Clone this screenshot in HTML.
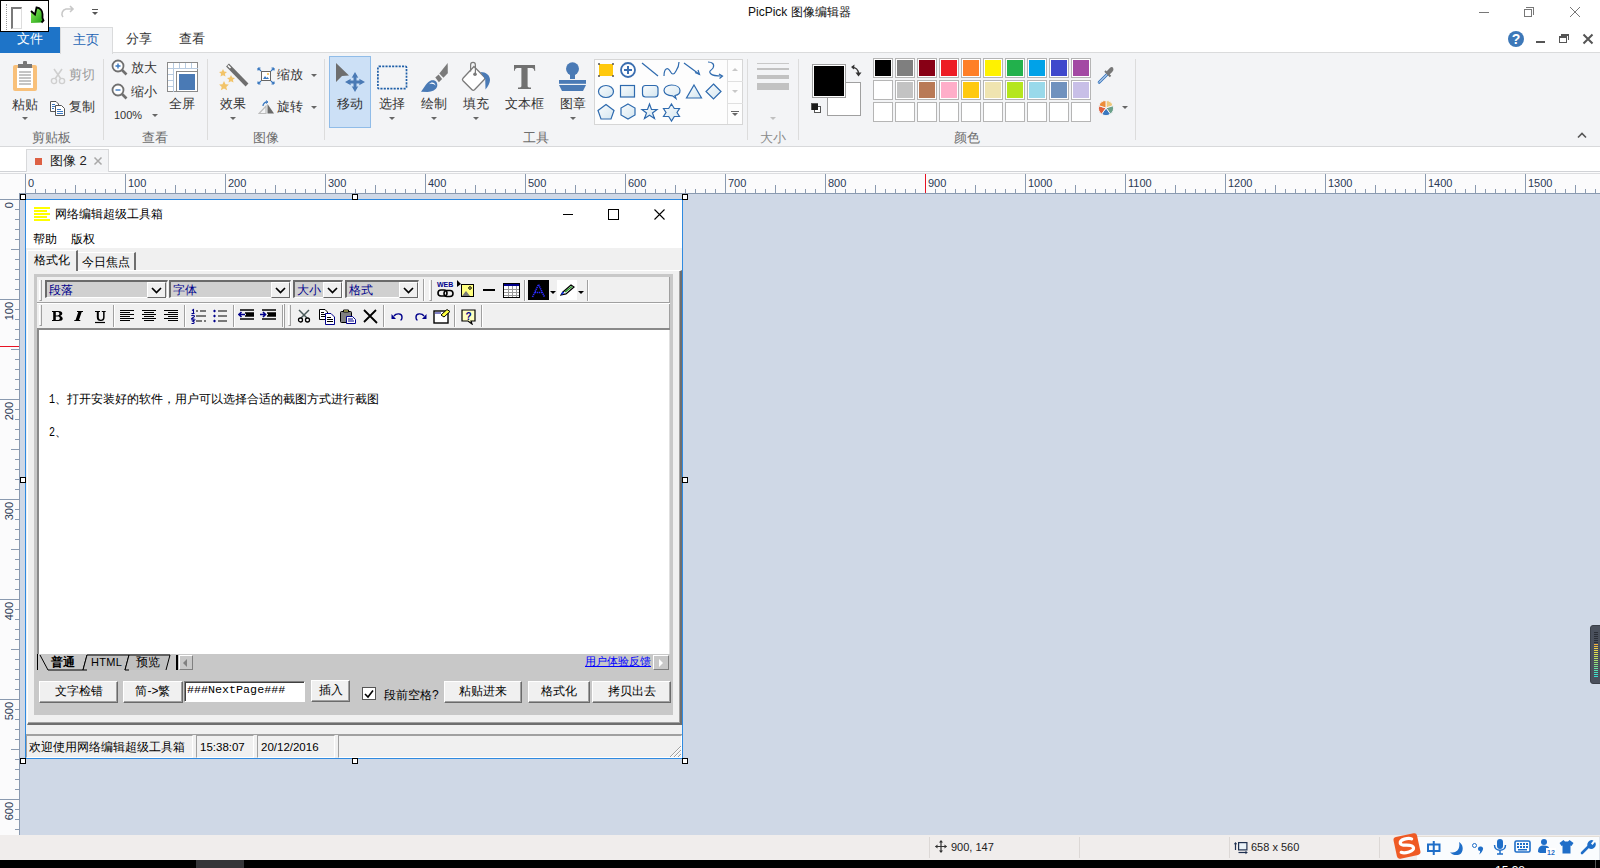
<!DOCTYPE html>
<html><head><meta charset="utf-8">
<style>
*{box-sizing:border-box}
html,body{margin:0;padding:0;width:1600px;height:868px;overflow:hidden;background:#fff;font-family:"Liberation Sans",sans-serif;font-size:12px;color:#222}
.a{position:absolute}
.t{position:absolute;white-space:nowrap;line-height:1}
#title{left:0;top:0;width:1600px;height:27px;background:#fff}
#tabs{left:0;top:27px;width:1600px;height:26px;background:#fff;border-bottom:1px solid #dadbdc}
#ribbon{left:0;top:52px;width:1600px;height:95px;background:#f3f4f6;border-top:1px solid #dadbdc;border-bottom:1px solid #d8d9db}
#doctabs{left:0;top:147px;width:1600px;height:25px;background:#fff;border-bottom:1px solid #d0d2d6}
#hruler{left:0;top:172px;width:1600px;height:22px;background:#fbfbfc}
#vruler{left:0;top:194px;width:20px;height:641px;background:#fbfbfc}
#canvas{left:20px;top:194px;width:1580px;height:641px;background:#cfd8e6}
#status{left:0;top:835px;width:1600px;height:25px;background:#f0edec}
#taskbar{left:0;top:860px;width:1600px;height:8px;background:#000}
.sep{position:absolute;width:1px;background:#dcdcdc}
.glabel{position:absolute;color:#6d6d6d;font-size:13px;line-height:1;white-space:nowrap;margin-top:1px}
.lbl{position:absolute;color:#333;font-size:13px;line-height:1;white-space:nowrap}
.dd{position:absolute;width:0;height:0;border-left:3px solid transparent;border-right:3px solid transparent;border-top:3px solid #666}
.sw{position:absolute;width:20px;height:20px;border:1px solid #b5b5b5;background:#fff}
.sw i{position:absolute;left:1px;top:1px;width:16px;height:16px}
.rl{font-size:11px;color:#2b3a55}
.hr{margin-top:1px}
.vr{writing-mode:vertical-rl;transform:rotate(180deg)}
.grip{width:3px;border-left:1px solid #fff;border-right:1px solid #a0a0a0;border-bottom:1px solid #a0a0a0}
.vsep{width:2px;border-left:1px solid #a0a0a0;border-right:1px solid #fff}
.sel{position:absolute;height:18px;background:#d0d0d0;border-top:2px solid #6a6a6a;border-left:2px solid #6a6a6a;border-right:1px solid #fff;border-bottom:1px solid #fff}
.sel span{position:absolute;left:2px;top:1px;font-size:12px;color:#00008b;line-height:14px}
.sel b{position:absolute;top:0;width:19px;height:16px;background:#f0f0f0;border:1px solid;border-color:#fff #6a6a6a #6a6a6a #fff}
.sel b svg{position:absolute;left:3px;top:4px}
.ddk{width:0;height:0;border-left:3px solid transparent;border-right:3px solid transparent;border-top:3px solid #000}
.ed{font-size:12px;color:#000}
.btn{position:absolute;height:22px;background:#f0f0f0;border:1px solid;border-color:#fff #6a6a6a #6a6a6a #fff;box-shadow:inset -1px -1px 0 #a0a0a0;font-size:12px;color:#000;text-align:center;line-height:19px;white-space:nowrap}
.cell{position:absolute;height:23px;border:1px solid;border-color:#a0a0a0 #fff #fff #a0a0a0;font-size:12px;color:#000;padding:5px 0 0 2px;line-height:13px;white-space:nowrap}
.h{position:absolute;width:6px;height:6px;background:#fff;border:1px solid #000}
</style></head><body>
<!-- TITLE BAR -->
<div id="title" class="a">
  <div class="a" style="left:0;top:0;width:49px;height:32px;border:1px solid #000;border-width:1px 1px 1.5px 1px;background:#fff;z-index:5">
    <div class="a" style="left:5px;top:3px;width:1px;height:26px;border-left:1px dotted #999"></div>
    <div class="a" style="left:10px;top:6px;width:11px;height:22px;border-left:2px solid #7a7a7a;border-top:2px solid #7a7a7a;border-right:1px solid #ddd;border-bottom:1px solid #ddd"></div>
    <svg class="a" style="left:29px;top:5px" width="15" height="18" viewBox="29 5 15 18"><defs><linearGradient id="gr" x1="0" y1="0" x2="1" y2="1"><stop offset="0" stop-color="#8ff060"/><stop offset="1" stop-color="#1a9a10"/></linearGradient></defs><path d="M30 22 L30 10 L34 13.5 L35.5 6.5 C39.5 7 41.5 10 41.5 13 L41.5 17 L42.5 19.5 L40.5 21.5 Z" fill="url(#gr)"/><path d="M30 10 L34 13.5 L35.5 6.5 C39.5 7 41.5 10 41.5 13 L41.5 17 L42.5 19.5 L40.5 21.5" fill="none" stroke="#000" stroke-width="1.8"/></svg>
  </div>
  <svg class="a" style="left:60px;top:5px" width="16" height="14" viewBox="0 0 16 14"><path d="M3 12 A5 5 0 0 1 6 4 L13 4 M10 1 L13 4 L10 7" fill="none" stroke="#c8c8c8" stroke-width="1.6"/></svg>
  <div class="a" style="left:92px;top:9px;width:6px;height:1px;background:#555"></div>
  <div class="dd" style="left:92px;top:12px;border-top-color:#555"></div>
  <div class="t" style="left:748px;top:6px;font-size:12px;color:#111">PicPick 图像编辑器</div>
  <div class="a" style="left:1479px;top:12px;width:10px;height:1px;background:#777"></div>
  <div class="a" style="left:1524px;top:9px;width:8px;height:8px;border:1px solid #777"></div>
  <div class="a" style="left:1526px;top:7px;width:8px;height:8px;border-top:1px solid #777;border-right:1px solid #777"></div>
  <svg class="a" style="left:1569px;top:6px" width="12" height="12"><path d="M1 1 L11 11 M11 1 L1 11" stroke="#777" stroke-width="1"/></svg>
</div>
<!-- RIBBON TABS -->
<div id="tabs" class="a">
  <div class="a" style="left:0;top:0;width:60px;height:26px;background:#1e74c8;z-index:3"></div>
  <div class="t" style="left:17px;top:5px;font-size:13px;color:#fff;z-index:4">文件</div>
  <div class="a" style="left:60px;top:0;width:53px;height:27px;background:#f3f4f6;border:1px solid #dadbdc;border-bottom:none;z-index:3"></div>
  <div class="t" style="left:73px;top:6px;font-size:13px;color:#1e64b4;z-index:4">主页</div>
  <div class="t" style="left:126px;top:5px;font-size:13px;color:#333">分享</div>
  <div class="t" style="left:179px;top:5px;font-size:13px;color:#333">查看</div>
  <svg class="a" style="left:1507px;top:3px" width="18" height="18" viewBox="0 0 18 18"><circle cx="9" cy="9" r="8" fill="#3d78b8"/><text x="9" y="14" font-family="Liberation Sans" font-weight="bold" font-size="14" fill="#fff" text-anchor="middle">?</text></svg>
  <div class="a" style="left:1536px;top:14px;width:9px;height:2px;background:#555"></div>
  <div class="a" style="left:1559px;top:9px;width:8px;height:7px;border:1px solid #555;border-top-width:2px"></div>
  <div class="a" style="left:1561px;top:7px;width:8px;height:6px;border-top:2px solid #555;border-right:1px solid #555"></div>
  <svg class="a" style="left:1582px;top:6px" width="12" height="12"><path d="M1.5 1.5 L10.5 10.5 M10.5 1.5 L1.5 10.5" stroke="#555" stroke-width="2"/></svg>
</div>
<!-- RIBBON -->
<div id="ribbon" class="a"></div>
<!-- RIBBON CONTENT -->
<div id="rib">
<!-- clipboard -->
<svg class="a" style="left:12px;top:60px" width="27" height="33" viewBox="0 0 27 33">
 <rect x="1" y="5" width="24" height="26" rx="2" fill="#f8c07a"/>
 <rect x="5" y="8" width="16" height="20" fill="#fff"/>
 <path d="M6 4 L20 4 L20 8 L6 8 Z" fill="#777"/><rect x="11" y="1" width="4" height="4" rx="1" fill="#777"/>
 <path d="M7 12h12M7 15h12M7 18h12M7 21h12M7 24h12" stroke="#8a8a8a" stroke-width="1"/>
</svg>
<div class="lbl" style="left:12px;top:98px">粘贴</div>
<div class="dd" style="left:22px;top:117px"></div>
<svg class="a" style="left:50px;top:68px" width="16" height="17" viewBox="0 0 16 17"><path d="M4 1 L11 11 M12 1 L5 11" stroke="#cfcfcf" stroke-width="1.6"/><circle cx="4" cy="13" r="2.6" fill="none" stroke="#cfcfcf" stroke-width="1.4"/><circle cx="12" cy="13" r="2.6" fill="none" stroke="#cfcfcf" stroke-width="1.4"/></svg>
<div class="lbl" style="left:69px;top:68px;color:#9a9a9a">剪切</div>
<svg class="a" style="left:49px;top:100px" width="18" height="17" viewBox="49 100 18 17"><path d="M50.5 101.5 H56 L58.5 104 V111.5 H50.5 Z" fill="#fff" stroke="#555"/><path d="M55.5 105.5 H61.5 L64.5 108.5 V115.5 H55.5 Z" fill="#fff" stroke="#555"/><path d="M52 104.5 H55 M52 106.5 H55 M52 108.5 H54" stroke="#3a78c0"/><path d="M57 109.5 H61 M57 111.5 H63 M57 113.5 H63" stroke="#3a78c0"/></svg>
<div class="lbl" style="left:69px;top:100px">复制</div>
<div class="sep" style="left:103px;top:59px;height:81px"></div>
<div class="glabel" style="left:32px;top:130px">剪贴板</div>
<!-- view -->
<svg class="a" style="left:111px;top:59px" width="17" height="17" viewBox="0 0 17 17"><circle cx="7" cy="7" r="5.5" fill="#fff" stroke="#707070" stroke-width="1.8"/><path d="M11 11 L15.5 15.5" stroke="#707070" stroke-width="2.6"/><path d="M4.5 7h5M7 4.5v5" stroke="#3a78c0" stroke-width="1.4"/></svg>
<div class="lbl" style="left:131px;top:61px">放大</div>
<svg class="a" style="left:111px;top:83px" width="17" height="17" viewBox="0 0 17 17"><circle cx="7" cy="7" r="5.5" fill="#fff" stroke="#707070" stroke-width="1.8"/><path d="M11 11 L15.5 15.5" stroke="#707070" stroke-width="2.6"/><path d="M4.5 7h5" stroke="#3a78c0" stroke-width="1.4"/></svg>
<div class="lbl" style="left:131px;top:85px">缩小</div>
<div class="t" style="left:114px;top:110px;font-size:11px;color:#333">100%</div>
<div class="dd" style="left:152px;top:114px"></div>
<svg class="a" style="left:167px;top:62px" width="32" height="31" viewBox="0 0 32 31">
 <rect x="0.5" y="0.5" width="30" height="29" fill="#fff" stroke="#8a8a8a"/>
 <path d="M6.5 1v29M12.5 1v6M18.5 1v6M24.5 1v6M1 6.5h30M1 12.5h6M1 18.5h6M1 24.5h6" stroke="#b8cbe0"/>
 <rect x="9.5" y="9.5" width="21" height="20" fill="#fff" stroke="#8a8a8a"/>
 <rect x="12" y="12" width="16" height="16" fill="#4a7ab5"/>
</svg>
<div class="lbl" style="left:169px;top:97px">全屏</div>
<div class="sep" style="left:207px;top:59px;height:81px"></div>
<div class="glabel" style="left:142px;top:130px">查看</div>
<!-- image -->
<svg class="a" style="left:217px;top:62px" width="33" height="31" viewBox="0 0 33 31">
 <path d="M10.5 3 L30 23" stroke="#6e6e6e" stroke-width="4"/><path d="M11 3.5 L13.5 6" stroke="#fff" stroke-width="1.6"/>
 <path d="M6 7l1.2 2.6 2.8.3-2.1 1.9.6 2.8-2.5-1.4-2.5 1.4.6-2.8-2.1-1.9 2.8-.3z" fill="#f2c46a"/>
 <path d="M14 13l1.2 2.6 2.8.3-2.1 1.9.6 2.8-2.5-1.4-2.5 1.4.6-2.8-2.1-1.9 2.8-.3z" fill="#f2c46a"/>
 <path d="M7 19l1.5 3.2 3.4.4-2.6 2.3.8 3.4-3.1-1.8-3.1 1.8.8-3.4-2.6-2.3 3.4-.4z" fill="#f2c46a"/>
</svg>
<div class="lbl" style="left:220px;top:97px">效果</div>
<div class="dd" style="left:230px;top:117px"></div>
<svg class="a" style="left:257px;top:67px" width="18" height="18" viewBox="0 0 18 18">
 <rect x="4.5" y="4.5" width="9" height="9" fill="#fff" stroke="#666"/><path d="M6 12l2-3 1.5 2 1-1 1.5 2z" fill="#3a78c0"/><circle cx="11" cy="7" r="1" fill="#f2b84a"/>
 <path d="M1 1l3 3M1 1h2.5M1 1v2.5M17 1l-3 3M17 1h-2.5M17 1v2.5M1 17l3-3M1 17h2.5M1 17v-2.5M17 17l-3-3M17 17h-2.5M17 17v-2.5" stroke="#3a78c0" stroke-width="1.2"/>
</svg>
<div class="lbl" style="left:277px;top:68px">缩放</div>
<div class="dd" style="left:311px;top:74px"></div>
<svg class="a" style="left:258px;top:100px" width="17" height="14" viewBox="0 0 17 14"><path d="M1 13.5 L8 13.5 L8 6 Z" fill="none" stroke="#bdbdbd" stroke-width="1.2"/><path d="M9.5 13.5 L16 13.5 L9.5 4 Z" fill="#6a6a6a"/><path d="M5 6 A4 4 0 0 1 9 2" fill="none" stroke="#3a78c0" stroke-width="1.3"/><path d="M8 0.5 L10 2 L8 3.5" fill="none" stroke="#3a78c0" stroke-width="1"/></svg>
<div class="lbl" style="left:277px;top:100px">旋转</div>
<div class="dd" style="left:311px;top:106px"></div>
<div class="sep" style="left:324px;top:59px;height:81px"></div>
<div class="glabel" style="left:253px;top:130px">图像</div>
<!-- tools -->
<div class="a" style="left:329px;top:56px;width:42px;height:72px;background:#cce0f6;border:1px solid #90bce8"></div>
<svg class="a" style="left:330px;top:58px" width="40" height="38" viewBox="330 58 40 38">
 <path d="M336 63 L349 75.5 L342 76 L336 82 Z" fill="#6e6e6e"/>
 <path d="M355 75 V89 M348 82 H362" stroke="#4a7ab5" stroke-width="3"/>
 <path d="M355 72 L358.3 77.8 Q355 76.6 351.7 77.8 Z M355 92 L358.3 86.2 Q355 87.4 351.7 86.2 Z M345 82 L350.8 78.7 Q349.6 82 350.8 85.3 Z M365 82 L359.2 78.7 Q360.4 82 359.2 85.3 Z" fill="#4a7ab5"/>
</svg>
<div class="lbl" style="left:337px;top:97px">移动</div>
<svg class="a" style="left:374px;top:62px" width="36" height="30" viewBox="374 62 36 30"><rect x="377.9" y="66.4" width="28.6" height="22.2" rx="1" fill="none" stroke="#1f5fa8" stroke-width="1.7" stroke-dasharray="2.1 1.2"/></svg>
<div class="lbl" style="left:379px;top:97px">选择</div>
<div class="dd" style="left:389px;top:117px"></div>
<svg class="a" style="left:415px;top:58px" width="40" height="38" viewBox="415 58 40 38">
 <path d="M447.7 63 L447.8 73.3 L443.4 77.7 L439.3 73.6 Z" fill="#7a7a7a"/>
 <path d="M435.3 77.6 L438.6 74.4 L442.1 78.9 L438.9 82.2 Z" fill="#7a7a7a"/>
 <path d="M421 91.8 C424.5 87.5 427 81.5 431.5 80.3 C435.5 79.5 438 82.5 437.2 86.2 C436.3 89.8 432 91.8 427.5 91.9 Z" fill="#4a7ab5"/>
 <path d="M429.2 84.2 C430.8 81.8 434.8 81.6 435.6 85.8 C434.6 83.9 431.8 83.2 429.2 84.2 Z" fill="#fff"/>
</svg>
<div class="lbl" style="left:421px;top:97px">绘制</div>
<div class="dd" style="left:431px;top:117px"></div>
<svg class="a" style="left:458px;top:60px" width="36" height="34" viewBox="458 60 36 34">
 <path d="M474 66.5 L484.3 77 Q485.5 78.3 484.3 79.5 L474.5 89.8 Q473.2 91 472 89.8 L463 80.8 Q461.8 79.5 463 78.3 Z" fill="#fff" stroke="#7a7a7a" stroke-width="1.3"/>
 <path d="M470.6 71.5 V65 Q470.6 62.3 473 62.3 Q475.4 62.3 475.4 65 V74" fill="none" stroke="#7a7a7a" stroke-width="1.2"/>
 <circle cx="475" cy="74.2" r="1.8" fill="#7a7a7a"/>
 <path d="M480.5 72 C486 72 490 75 490 80 C490 83 488 86.5 485.5 89.5 L485.2 79 Z" fill="#4a7ab5"/>
</svg>
<div class="lbl" style="left:463px;top:97px">填充</div>
<div class="dd" style="left:473px;top:117px"></div>
<svg class="a" style="left:510px;top:62px" width="30" height="30" viewBox="510 62 30 30"><path d="M514 65 H535 L535.2 71 H534.5 C534 68.5 533 68 530.5 68 H527.6 V86 C527.6 87 528.5 87.6 531 87.6 V89 H518 V87.6 C520.5 87.6 521.4 87 521.4 86 V68 H518.5 C516 68 515 68.5 514.5 71 H514 Z" fill="#717171"/></svg>
<div class="lbl" style="left:505px;top:97px">文本框</div>
<svg class="a" style="left:555px;top:60px" width="35" height="34" viewBox="555 60 35 34"><circle cx="572.5" cy="68.8" r="6.5" fill="#4a7ab5"/><rect x="570" y="72" width="5" height="7" fill="#4a7ab5"/><rect x="559" y="80" width="27" height="3.8" fill="#4a7ab5"/><path d="M559 85 H586 L583 91 H562 Z" fill="#4a7ab5"/></svg>
<div class="lbl" style="left:560px;top:97px">图章</div>
<div class="dd" style="left:570px;top:117px"></div>
<div class="glabel" style="left:523px;top:130px">工具</div>
<!-- shapes gallery -->
<div class="a" style="left:594px;top:59px;width:149px;height:66px;background:#fdfdfd;border:1px solid #d6d6d6"></div>
<div class="a" style="left:727px;top:60px;width:1px;height:64px;background:#e0e0e0"></div>
<div class="a" style="left:728px;top:81px;width:15px;height:1px;background:#e0e0e0"></div>
<div class="a" style="left:728px;top:103px;width:15px;height:1px;background:#e0e0e0"></div>
<div class="a" style="left:732px;top:68px;width:0;height:0;border-left:3px solid transparent;border-right:3px solid transparent;border-bottom:3px solid #c8c8c8"></div>
<div class="a" style="left:732px;top:90px;width:0;height:0;border-left:3px solid transparent;border-right:3px solid transparent;border-top:3px solid #c8c8c8"></div>
<div class="a" style="left:731px;top:111px;width:8px;height:1px;background:#666"></div>
<div class="a" style="left:732px;top:113px;width:0;height:0;border-left:3px solid transparent;border-right:3px solid transparent;border-top:3px solid #666"></div>
<svg class="a" style="left:594px;top:59px" width="134" height="66" viewBox="0 0 134 66">
 <defs><linearGradient id="g" x1="0" y1="0" x2="1" y2="1"><stop offset="0" stop-color="#fafcfd"/><stop offset="1" stop-color="#d4e6f0"/></linearGradient></defs>
 <rect x="5" y="5" width="14" height="12" fill="#ffc90e"/>
 <g fill="#555"><circle cx="5" cy="5" r="1"/><circle cx="19" cy="5" r="1"/><circle cx="5" cy="17" r="1"/><circle cx="19" cy="17" r="1"/></g>
 <circle cx="34" cy="11" r="7" fill="#fff" stroke="#3a6eb0" stroke-width="1.8"/><path d="M30 11h8M34 7v8" stroke="#3a6eb0" stroke-width="2"/>
 <g fill="none" stroke="#2e6aae" stroke-width="1.2">
 <path d="M48 4 L64 17"/>
 <path d="M70 17 C70 9 74 8 76 12 C78 16 80 16 82 12 C84 9 85 6 85 3"/>
 <path d="M90 4 L105 15"/><path d="M101 13.5 L105.5 15.5 L104 11"/>
 <path d="M114 3 C118 3 121 5 119 9 C117 12 114 12 117 15 C119 17 124 17 128 17"/><path d="M125 15 L128.5 17 L125.5 19.5"/>
 </g>
 <g fill="url(#g)" stroke="#2e6aae" stroke-width="1.2">
 <ellipse cx="12" cy="32.5" rx="7.5" ry="6"/>
 <rect x="26.5" y="26.5" width="14" height="11.5"/>
 <rect x="48.5" y="26.5" width="15.5" height="11.5" rx="3"/>
 <path d="M77.5 26 C83 26 86 28.5 86 31.5 C86 34 84 36 81 36.5 L82 39.5 L78.5 36.8 C73.5 36.8 70 34.5 70 31.5 C70 28.5 73 26 77.5 26 Z"/>
 <path d="M100 26 L107.5 39 L92.5 39 Z"/>
 <path d="M119.5 25 L127 32.5 L119.5 40 L112 32.5 Z"/>
 <path d="M12 45.5 L20 51.5 L17 60 L7 60 L4 51.5 Z"/>
 <path d="M34 45 L41 49 L41 56 L34 60 L27 56 L27 49 Z"/>
 <path d="M55.5 45 L57.5 50.5 L63 50.5 L58.5 54 L60.5 59.5 L55.5 56.3 L50.5 59.5 L52.5 54 L48 50.5 L53.5 50.5 Z"/>
 <path d="M77.5 45 L80.3 49.5 L85.5 49.5 L83 53.5 L85.5 57.5 L80.3 57.5 L77.5 62 L74.7 57.5 L69.5 57.5 L72 53.5 L69.5 49.5 L74.7 49.5 Z"/>
 </g>
</svg>
<div class="sep" style="left:747px;top:59px;height:81px"></div>
<!-- size -->
<div class="a" style="left:757px;top:63px;width:32px;height:1px;background:#c8c8c8"></div>
<div class="a" style="left:757px;top:68px;width:32px;height:2px;background:#c2c2c2"></div>
<div class="a" style="left:757px;top:75px;width:32px;height:4px;background:#c2c2c2"></div>
<div class="a" style="left:757px;top:83px;width:32px;height:7px;background:#c2c2c2"></div>
<div class="dd" style="left:770px;top:117px;border-top-color:#c0c0c0"></div>
<div class="glabel" style="left:760px;top:130px;color:#8a8a8a">大小</div>
<div class="sep" style="left:798px;top:59px;height:81px"></div>
<!-- colors -->
<div class="a" style="left:827px;top:82px;width:34px;height:34px;background:#fff;border:1px solid #a0a0a0"></div>
<div class="a" style="left:812px;top:64px;width:34px;height:34px;background:#000;border:1px solid #a0a0a0;box-shadow:inset 0 0 0 1px #fff"></div>
<div class="a" style="left:814px;top:106px;width:7px;height:7px;background:#fff;border:1px solid #555"></div>
<div class="a" style="left:811px;top:103px;width:7px;height:7px;background:#1a1a1a;box-shadow:inset 1px 1px 0 #555"></div>
<svg class="a" style="left:849px;top:63px" width="14" height="15" viewBox="849 63 14 15"><path d="M852.5 67.5 C855.5 67.5 858.3 69.5 858.5 73.5" fill="none" stroke="#333" stroke-width="1.4"/><path d="M851 67 L854.5 64.5 L854 69.5 Z M858.5 76.5 L855.5 72.5 L861.5 72.5 Z" fill="#333"/></svg>
<div class="sw" style="left:873px;top:58px"><i style="background:#000000"></i></div>
<div class="sw" style="left:873px;top:80px"></div>
<div class="sw" style="left:873px;top:102px"></div>
<div class="sw" style="left:895px;top:58px"><i style="background:#7f7f7f"></i></div>
<div class="sw" style="left:895px;top:80px"><i style="background:#c3c3c3"></i></div>
<div class="sw" style="left:895px;top:102px"></div>
<div class="sw" style="left:917px;top:58px"><i style="background:#880015"></i></div>
<div class="sw" style="left:917px;top:80px"><i style="background:#b97a57"></i></div>
<div class="sw" style="left:917px;top:102px"></div>
<div class="sw" style="left:939px;top:58px"><i style="background:#ed1c24"></i></div>
<div class="sw" style="left:939px;top:80px"><i style="background:#ffaec9"></i></div>
<div class="sw" style="left:939px;top:102px"></div>
<div class="sw" style="left:961px;top:58px"><i style="background:#ff7f27"></i></div>
<div class="sw" style="left:961px;top:80px"><i style="background:#ffc90e"></i></div>
<div class="sw" style="left:961px;top:102px"></div>
<div class="sw" style="left:983px;top:58px"><i style="background:#fff200"></i></div>
<div class="sw" style="left:983px;top:80px"><i style="background:#efe4b0"></i></div>
<div class="sw" style="left:983px;top:102px"></div>
<div class="sw" style="left:1005px;top:58px"><i style="background:#22b14c"></i></div>
<div class="sw" style="left:1005px;top:80px"><i style="background:#b5e61d"></i></div>
<div class="sw" style="left:1005px;top:102px"></div>
<div class="sw" style="left:1027px;top:58px"><i style="background:#00a2e8"></i></div>
<div class="sw" style="left:1027px;top:80px"><i style="background:#99d9ea"></i></div>
<div class="sw" style="left:1027px;top:102px"></div>
<div class="sw" style="left:1049px;top:58px"><i style="background:#3f48cc"></i></div>
<div class="sw" style="left:1049px;top:80px"><i style="background:#7092be"></i></div>
<div class="sw" style="left:1049px;top:102px"></div>
<div class="sw" style="left:1071px;top:58px"><i style="background:#a349a4"></i></div>
<div class="sw" style="left:1071px;top:80px"><i style="background:#c8bfe7"></i></div>
<div class="sw" style="left:1071px;top:102px"></div>
<svg class="a" style="left:1096px;top:65px" width="20" height="20" viewBox="1096 65 20 20"><path d="M1099.2 82.3 L1107.5 74" stroke="#3a78c0" stroke-width="3" stroke-linecap="round"/><path d="M1099.2 82.3 L1107.5 74" stroke="#fff" stroke-width="1" stroke-linecap="round"/><path d="M1105 71 L1110.5 76.5" stroke="#777" stroke-width="2"/><path d="M1106.5 71.5 L1109.8 68 Q1112 66.2 1113.2 68 Q1114.2 69.8 1112.2 72 L1109 75 Z" fill="#777"/></svg>
<svg class="a" style="left:1098px;top:100px" width="16" height="16" viewBox="-8 -8 16 16">
 <path d="M0 0 L0 -7.5 A7.5 7.5 0 0 1 7.1 -2.3 Z" fill="#efc87c" stroke="#f3f4f6" stroke-width="1"/>
 <path d="M0 0 L7.1 -2.3 A7.5 7.5 0 0 1 4.4 6.1 Z" fill="#6aa08a" stroke="#f3f4f6" stroke-width="1"/>
 <path d="M0 0 L4.4 6.1 A7.5 7.5 0 0 1 -4.4 6.1 Z" fill="#3a78c0" stroke="#f3f4f6" stroke-width="1"/>
 <path d="M0 0 L-4.4 6.1 A7.5 7.5 0 0 1 -7.1 -2.3 Z" fill="#e0603e" stroke="#f3f4f6" stroke-width="1"/>
 <path d="M0 0 L-7.1 -2.3 A7.5 7.5 0 0 1 0 -7.5 Z" fill="#ec8c3a" stroke="#f3f4f6" stroke-width="1"/>
</svg>
<div class="dd" style="left:1122px;top:106px"></div>
<div class="sep" style="left:1135px;top:59px;height:81px"></div>
<div class="glabel" style="left:954px;top:130px">颜色</div>
<svg class="a" style="left:1577px;top:132px" width="10" height="7" viewBox="0 0 10 7"><path d="M1 5.5 L5 1.5 L9 5.5" fill="none" stroke="#555" stroke-width="1.6"/></svg>
</div>

<!-- DOC TABS -->
<div id="doctabs" class="a">
  <div class="a" style="left:26px;top:2px;width:83px;height:23px;background:#f3f4f6;border:1px solid #d8d9db;border-bottom:none"></div>
  <div class="a" style="left:35px;top:11px;width:7px;height:7px;background:#dd6044"></div>
  <div class="t" style="left:50px;top:7px;font-size:13px;color:#222">图像 2</div>
  <svg class="a" style="left:93px;top:9px" width="10" height="10"><path d="M1.5 1.5 L8.5 8.5 M8.5 1.5 L1.5 8.5" stroke="#a8a8a8" stroke-width="1.5"/></svg>
</div>
<!-- RULERS -->
<div class="a" style="left:0;top:172px;width:1600px;height:22px;background:#fbfbfc"></div>
<div class="a" style="left:0;top:173px;width:1600px;height:1px;background:#dcdde0"></div>
<div class="a" style="left:19px;top:193px;width:1581px;height:1px;background:#8a9ab0"></div>
<svg class="a" style="left:0;top:172px" width="1600" height="22"><path d="M25.5 2V21" stroke="#8a9ab0"/><path d="M35.5 17V21" stroke="#8a9ab0"/><path d="M45.5 17V21" stroke="#8a9ab0"/><path d="M55.5 17V21" stroke="#8a9ab0"/><path d="M65.5 17V21" stroke="#8a9ab0"/><path d="M75.5 13V21" stroke="#8a9ab0"/><path d="M85.5 17V21" stroke="#8a9ab0"/><path d="M95.5 17V21" stroke="#8a9ab0"/><path d="M105.5 17V21" stroke="#8a9ab0"/><path d="M115.5 17V21" stroke="#8a9ab0"/><path d="M125.5 2V21" stroke="#8a9ab0"/><path d="M135.5 17V21" stroke="#8a9ab0"/><path d="M145.5 17V21" stroke="#8a9ab0"/><path d="M155.5 17V21" stroke="#8a9ab0"/><path d="M165.5 17V21" stroke="#8a9ab0"/><path d="M175.5 13V21" stroke="#8a9ab0"/><path d="M185.5 17V21" stroke="#8a9ab0"/><path d="M195.5 17V21" stroke="#8a9ab0"/><path d="M205.5 17V21" stroke="#8a9ab0"/><path d="M215.5 17V21" stroke="#8a9ab0"/><path d="M225.5 2V21" stroke="#8a9ab0"/><path d="M235.5 17V21" stroke="#8a9ab0"/><path d="M245.5 17V21" stroke="#8a9ab0"/><path d="M255.5 17V21" stroke="#8a9ab0"/><path d="M265.5 17V21" stroke="#8a9ab0"/><path d="M275.5 13V21" stroke="#8a9ab0"/><path d="M285.5 17V21" stroke="#8a9ab0"/><path d="M295.5 17V21" stroke="#8a9ab0"/><path d="M305.5 17V21" stroke="#8a9ab0"/><path d="M315.5 17V21" stroke="#8a9ab0"/><path d="M325.5 2V21" stroke="#8a9ab0"/><path d="M335.5 17V21" stroke="#8a9ab0"/><path d="M345.5 17V21" stroke="#8a9ab0"/><path d="M355.5 17V21" stroke="#8a9ab0"/><path d="M365.5 17V21" stroke="#8a9ab0"/><path d="M375.5 13V21" stroke="#8a9ab0"/><path d="M385.5 17V21" stroke="#8a9ab0"/><path d="M395.5 17V21" stroke="#8a9ab0"/><path d="M405.5 17V21" stroke="#8a9ab0"/><path d="M415.5 17V21" stroke="#8a9ab0"/><path d="M425.5 2V21" stroke="#8a9ab0"/><path d="M435.5 17V21" stroke="#8a9ab0"/><path d="M445.5 17V21" stroke="#8a9ab0"/><path d="M455.5 17V21" stroke="#8a9ab0"/><path d="M465.5 17V21" stroke="#8a9ab0"/><path d="M475.5 13V21" stroke="#8a9ab0"/><path d="M485.5 17V21" stroke="#8a9ab0"/><path d="M495.5 17V21" stroke="#8a9ab0"/><path d="M505.5 17V21" stroke="#8a9ab0"/><path d="M515.5 17V21" stroke="#8a9ab0"/><path d="M525.5 2V21" stroke="#8a9ab0"/><path d="M535.5 17V21" stroke="#8a9ab0"/><path d="M545.5 17V21" stroke="#8a9ab0"/><path d="M555.5 17V21" stroke="#8a9ab0"/><path d="M565.5 17V21" stroke="#8a9ab0"/><path d="M575.5 13V21" stroke="#8a9ab0"/><path d="M585.5 17V21" stroke="#8a9ab0"/><path d="M595.5 17V21" stroke="#8a9ab0"/><path d="M605.5 17V21" stroke="#8a9ab0"/><path d="M615.5 17V21" stroke="#8a9ab0"/><path d="M625.5 2V21" stroke="#8a9ab0"/><path d="M635.5 17V21" stroke="#8a9ab0"/><path d="M645.5 17V21" stroke="#8a9ab0"/><path d="M655.5 17V21" stroke="#8a9ab0"/><path d="M665.5 17V21" stroke="#8a9ab0"/><path d="M675.5 13V21" stroke="#8a9ab0"/><path d="M685.5 17V21" stroke="#8a9ab0"/><path d="M695.5 17V21" stroke="#8a9ab0"/><path d="M705.5 17V21" stroke="#8a9ab0"/><path d="M715.5 17V21" stroke="#8a9ab0"/><path d="M725.5 2V21" stroke="#8a9ab0"/><path d="M735.5 17V21" stroke="#8a9ab0"/><path d="M745.5 17V21" stroke="#8a9ab0"/><path d="M755.5 17V21" stroke="#8a9ab0"/><path d="M765.5 17V21" stroke="#8a9ab0"/><path d="M775.5 13V21" stroke="#8a9ab0"/><path d="M785.5 17V21" stroke="#8a9ab0"/><path d="M795.5 17V21" stroke="#8a9ab0"/><path d="M805.5 17V21" stroke="#8a9ab0"/><path d="M815.5 17V21" stroke="#8a9ab0"/><path d="M825.5 2V21" stroke="#8a9ab0"/><path d="M835.5 17V21" stroke="#8a9ab0"/><path d="M845.5 17V21" stroke="#8a9ab0"/><path d="M855.5 17V21" stroke="#8a9ab0"/><path d="M865.5 17V21" stroke="#8a9ab0"/><path d="M875.5 13V21" stroke="#8a9ab0"/><path d="M885.5 17V21" stroke="#8a9ab0"/><path d="M895.5 17V21" stroke="#8a9ab0"/><path d="M905.5 17V21" stroke="#8a9ab0"/><path d="M915.5 17V21" stroke="#8a9ab0"/><path d="M925.5 2V21" stroke="#8a9ab0"/><path d="M935.5 17V21" stroke="#8a9ab0"/><path d="M945.5 17V21" stroke="#8a9ab0"/><path d="M955.5 17V21" stroke="#8a9ab0"/><path d="M965.5 17V21" stroke="#8a9ab0"/><path d="M975.5 13V21" stroke="#8a9ab0"/><path d="M985.5 17V21" stroke="#8a9ab0"/><path d="M995.5 17V21" stroke="#8a9ab0"/><path d="M1005.5 17V21" stroke="#8a9ab0"/><path d="M1015.5 17V21" stroke="#8a9ab0"/><path d="M1025.5 2V21" stroke="#8a9ab0"/><path d="M1035.5 17V21" stroke="#8a9ab0"/><path d="M1045.5 17V21" stroke="#8a9ab0"/><path d="M1055.5 17V21" stroke="#8a9ab0"/><path d="M1065.5 17V21" stroke="#8a9ab0"/><path d="M1075.5 13V21" stroke="#8a9ab0"/><path d="M1085.5 17V21" stroke="#8a9ab0"/><path d="M1095.5 17V21" stroke="#8a9ab0"/><path d="M1105.5 17V21" stroke="#8a9ab0"/><path d="M1115.5 17V21" stroke="#8a9ab0"/><path d="M1125.5 2V21" stroke="#8a9ab0"/><path d="M1135.5 17V21" stroke="#8a9ab0"/><path d="M1145.5 17V21" stroke="#8a9ab0"/><path d="M1155.5 17V21" stroke="#8a9ab0"/><path d="M1165.5 17V21" stroke="#8a9ab0"/><path d="M1175.5 13V21" stroke="#8a9ab0"/><path d="M1185.5 17V21" stroke="#8a9ab0"/><path d="M1195.5 17V21" stroke="#8a9ab0"/><path d="M1205.5 17V21" stroke="#8a9ab0"/><path d="M1215.5 17V21" stroke="#8a9ab0"/><path d="M1225.5 2V21" stroke="#8a9ab0"/><path d="M1235.5 17V21" stroke="#8a9ab0"/><path d="M1245.5 17V21" stroke="#8a9ab0"/><path d="M1255.5 17V21" stroke="#8a9ab0"/><path d="M1265.5 17V21" stroke="#8a9ab0"/><path d="M1275.5 13V21" stroke="#8a9ab0"/><path d="M1285.5 17V21" stroke="#8a9ab0"/><path d="M1295.5 17V21" stroke="#8a9ab0"/><path d="M1305.5 17V21" stroke="#8a9ab0"/><path d="M1315.5 17V21" stroke="#8a9ab0"/><path d="M1325.5 2V21" stroke="#8a9ab0"/><path d="M1335.5 17V21" stroke="#8a9ab0"/><path d="M1345.5 17V21" stroke="#8a9ab0"/><path d="M1355.5 17V21" stroke="#8a9ab0"/><path d="M1365.5 17V21" stroke="#8a9ab0"/><path d="M1375.5 13V21" stroke="#8a9ab0"/><path d="M1385.5 17V21" stroke="#8a9ab0"/><path d="M1395.5 17V21" stroke="#8a9ab0"/><path d="M1405.5 17V21" stroke="#8a9ab0"/><path d="M1415.5 17V21" stroke="#8a9ab0"/><path d="M1425.5 2V21" stroke="#8a9ab0"/><path d="M1435.5 17V21" stroke="#8a9ab0"/><path d="M1445.5 17V21" stroke="#8a9ab0"/><path d="M1455.5 17V21" stroke="#8a9ab0"/><path d="M1465.5 17V21" stroke="#8a9ab0"/><path d="M1475.5 13V21" stroke="#8a9ab0"/><path d="M1485.5 17V21" stroke="#8a9ab0"/><path d="M1495.5 17V21" stroke="#8a9ab0"/><path d="M1505.5 17V21" stroke="#8a9ab0"/><path d="M1515.5 17V21" stroke="#8a9ab0"/><path d="M1525.5 2V21" stroke="#8a9ab0"/><path d="M1535.5 17V21" stroke="#8a9ab0"/><path d="M1545.5 17V21" stroke="#8a9ab0"/><path d="M1555.5 17V21" stroke="#8a9ab0"/><path d="M1565.5 17V21" stroke="#8a9ab0"/><path d="M1575.5 13V21" stroke="#8a9ab0"/><path d="M1585.5 17V21" stroke="#8a9ab0"/><path d="M1595.5 17V21" stroke="#8a9ab0"/><path d="M925.5 2V21" stroke="#e81123"/></svg>
<div class="t rl hr" style="left:28px;top:177px">0</div>
<div class="t rl hr" style="left:128px;top:177px">100</div>
<div class="t rl hr" style="left:228px;top:177px">200</div>
<div class="t rl hr" style="left:328px;top:177px">300</div>
<div class="t rl hr" style="left:428px;top:177px">400</div>
<div class="t rl hr" style="left:528px;top:177px">500</div>
<div class="t rl hr" style="left:628px;top:177px">600</div>
<div class="t rl hr" style="left:728px;top:177px">700</div>
<div class="t rl hr" style="left:828px;top:177px">800</div>
<div class="t rl hr" style="left:928px;top:177px">900</div>
<div class="t rl hr" style="left:1028px;top:177px">1000</div>
<div class="t rl hr" style="left:1128px;top:177px">1100</div>
<div class="t rl hr" style="left:1228px;top:177px">1200</div>
<div class="t rl hr" style="left:1328px;top:177px">1300</div>
<div class="t rl hr" style="left:1428px;top:177px">1400</div>
<div class="t rl hr" style="left:1528px;top:177px">1500</div>
<div class="a" style="left:0;top:194px;width:19px;height:641px;background:#fbfbfc"></div>
<div class="a" style="left:19px;top:194px;width:1px;height:641px;background:#8a9ab0"></div>
<svg class="a" style="left:0;top:194px" width="19" height="641"><path d="M0 5.5H19" stroke="#8a9ab0"/><path d="M15 15.5H19" stroke="#8a9ab0"/><path d="M15 25.5H19" stroke="#8a9ab0"/><path d="M15 35.5H19" stroke="#8a9ab0"/><path d="M15 45.5H19" stroke="#8a9ab0"/><path d="M11 55.5H19" stroke="#8a9ab0"/><path d="M15 65.5H19" stroke="#8a9ab0"/><path d="M15 75.5H19" stroke="#8a9ab0"/><path d="M15 85.5H19" stroke="#8a9ab0"/><path d="M15 95.5H19" stroke="#8a9ab0"/><path d="M0 105.5H19" stroke="#8a9ab0"/><path d="M15 115.5H19" stroke="#8a9ab0"/><path d="M15 125.5H19" stroke="#8a9ab0"/><path d="M15 135.5H19" stroke="#8a9ab0"/><path d="M15 145.5H19" stroke="#8a9ab0"/><path d="M11 155.5H19" stroke="#8a9ab0"/><path d="M15 165.5H19" stroke="#8a9ab0"/><path d="M15 175.5H19" stroke="#8a9ab0"/><path d="M15 185.5H19" stroke="#8a9ab0"/><path d="M15 195.5H19" stroke="#8a9ab0"/><path d="M0 205.5H19" stroke="#8a9ab0"/><path d="M15 215.5H19" stroke="#8a9ab0"/><path d="M15 225.5H19" stroke="#8a9ab0"/><path d="M15 235.5H19" stroke="#8a9ab0"/><path d="M15 245.5H19" stroke="#8a9ab0"/><path d="M11 255.5H19" stroke="#8a9ab0"/><path d="M15 265.5H19" stroke="#8a9ab0"/><path d="M15 275.5H19" stroke="#8a9ab0"/><path d="M15 285.5H19" stroke="#8a9ab0"/><path d="M15 295.5H19" stroke="#8a9ab0"/><path d="M0 305.5H19" stroke="#8a9ab0"/><path d="M15 315.5H19" stroke="#8a9ab0"/><path d="M15 325.5H19" stroke="#8a9ab0"/><path d="M15 335.5H19" stroke="#8a9ab0"/><path d="M15 345.5H19" stroke="#8a9ab0"/><path d="M11 355.5H19" stroke="#8a9ab0"/><path d="M15 365.5H19" stroke="#8a9ab0"/><path d="M15 375.5H19" stroke="#8a9ab0"/><path d="M15 385.5H19" stroke="#8a9ab0"/><path d="M15 395.5H19" stroke="#8a9ab0"/><path d="M0 405.5H19" stroke="#8a9ab0"/><path d="M15 415.5H19" stroke="#8a9ab0"/><path d="M15 425.5H19" stroke="#8a9ab0"/><path d="M15 435.5H19" stroke="#8a9ab0"/><path d="M15 445.5H19" stroke="#8a9ab0"/><path d="M11 455.5H19" stroke="#8a9ab0"/><path d="M15 465.5H19" stroke="#8a9ab0"/><path d="M15 475.5H19" stroke="#8a9ab0"/><path d="M15 485.5H19" stroke="#8a9ab0"/><path d="M15 495.5H19" stroke="#8a9ab0"/><path d="M0 505.5H19" stroke="#8a9ab0"/><path d="M15 515.5H19" stroke="#8a9ab0"/><path d="M15 525.5H19" stroke="#8a9ab0"/><path d="M15 535.5H19" stroke="#8a9ab0"/><path d="M15 545.5H19" stroke="#8a9ab0"/><path d="M11 555.5H19" stroke="#8a9ab0"/><path d="M15 565.5H19" stroke="#8a9ab0"/><path d="M15 575.5H19" stroke="#8a9ab0"/><path d="M15 585.5H19" stroke="#8a9ab0"/><path d="M15 595.5H19" stroke="#8a9ab0"/><path d="M0 605.5H19" stroke="#8a9ab0"/><path d="M15 615.5H19" stroke="#8a9ab0"/><path d="M15 625.5H19" stroke="#8a9ab0"/><path d="M15 635.5H19" stroke="#8a9ab0"/><path d="M0 152.5H19" stroke="#e81123"/></svg>
<div class="t rl vr" style="left:4px;top:202px">0</div>
<div class="t rl vr" style="left:4px;top:302px">100</div>
<div class="t rl vr" style="left:4px;top:402px">200</div>
<div class="t rl vr" style="left:4px;top:502px">300</div>
<div class="t rl vr" style="left:4px;top:602px">400</div>
<div class="t rl vr" style="left:4px;top:702px">500</div>
<div class="t rl vr" style="left:4px;top:802px">600</div>
<!-- CANVAS -->
<div id="canvas" class="a"></div>
<!-- IMAGE / INNER WINDOW -->
<div class="a" style="left:25px;top:199px;width:658px;height:560px;background:#f0f0f0;border:1px solid #2f8ae0"></div>
<div class="a" style="left:26px;top:200px;width:656px;height:48px;background:#fff"></div>
<div class="a" style="left:34px;top:207px;width:16px;height:2px;background:#ffff00"></div>
<div class="a" style="left:34px;top:210px;width:13px;height:2px;background:#ffff00"></div>
<div class="a" style="left:34px;top:213px;width:16px;height:2px;background:#ffff00"></div>
<div class="a" style="left:34px;top:216px;width:13px;height:2px;background:#ffff00"></div>
<div class="a" style="left:34px;top:219px;width:16px;height:2px;background:#ffff00"></div>
<div class="t" style="left:55px;top:208px;font-size:12px;color:#000">网络编辑超级工具箱</div>
<div class="a" style="left:563px;top:214px;width:10px;height:1px;background:#000"></div>
<div class="a" style="left:608px;top:209px;width:11px;height:11px;border:1px solid #000"></div>
<svg class="a" style="left:654px;top:209px" width="11" height="11"><path d="M0.5 0.5 L10.5 10.5 M10.5 0.5 L0.5 10.5" stroke="#000" stroke-width="1.1"/></svg>
<div class="t" style="left:33px;top:233px;font-size:12px;color:#000">帮助</div>
<div class="t" style="left:71px;top:233px;font-size:12px;color:#000">版权</div>
<!-- tabs -->
<div class="a" style="left:27px;top:270px;width:655px;height:455px;border-top:1px solid #fff;border-left:1px solid #fff;border-right:2px solid #6e6e6e;border-bottom:2px solid #6e6e6e;box-shadow:inset -1px -1px 0 #a0a0a0"></div>
<div class="a" style="left:27px;top:250px;width:51px;height:21px;background:#f0f0f0;border-top:1px solid #fff;border-left:1px solid #fff;border-right:2px solid #6e6e6e"></div>
<div class="t" style="left:34px;top:254px;font-size:12px;color:#000">格式化</div>
<div class="a" style="left:78px;top:252px;width:58px;height:18px;border-top:1px solid #fff;border-right:2px solid #6e6e6e"></div>
<div class="t" style="left:82px;top:256px;font-size:12px;color:#000">今日焦点</div>
<!-- grey panel -->
<div class="a" style="left:34px;top:274px;width:639px;height:441px;background:#c8c8c8"></div>
<!-- toolbar area -->
<div class="a" style="left:37px;top:277px;width:633px;height:53px;background:#f0f0f0;border-right:1px solid #a0a0a0"></div>
<div class="a" style="left:37px;top:302px;width:633px;height:1px;background:#a0a0a0"></div>
<div class="a" style="left:37px;top:303px;width:633px;height:1px;background:#fff"></div>
<div class="a" style="left:37px;top:328px;width:633px;height:2px;background:#8a8a8a"></div>
<!-- row1 -->
<div class="a grip" style="left:39px;top:280px;height:21px"></div>
<div class="sel" style="left:45px;top:280px;width:123px"><span>段落</span><b style="left:100px"><svg width="11" height="7" viewBox="0 0 11 7"><path d="M1 1 L5.5 5.5 L10 1" fill="none" stroke="#000" stroke-width="1.7"/></svg></b></div>
<div class="sel" style="left:169px;top:280px;width:122px"><span>字体</span><b style="left:100px"><svg width="11" height="7" viewBox="0 0 11 7"><path d="M1 1 L5.5 5.5 L10 1" fill="none" stroke="#000" stroke-width="1.7"/></svg></b></div>
<div class="sel" style="left:293px;top:280px;width:50px"><span>大小</span><b style="left:28px"><svg width="11" height="7" viewBox="0 0 11 7"><path d="M1 1 L5.5 5.5 L10 1" fill="none" stroke="#000" stroke-width="1.7"/></svg></b></div>
<div class="sel" style="left:345px;top:280px;width:74px"><span>格式</span><b style="left:52px"><svg width="11" height="7" viewBox="0 0 11 7"><path d="M1 1 L5.5 5.5 L10 1" fill="none" stroke="#000" stroke-width="1.7"/></svg></b></div>
<div class="a vsep" style="left:423px;top:279px;height:22px"></div>
<div class="a grip" style="left:429px;top:280px;height:21px"></div>
<div class="t" style="left:437px;top:281px;font-size:7px;font-weight:bold;color:#00008b;letter-spacing:0">WEB</div>
<svg class="a" style="left:437px;top:289px" width="17" height="9" viewBox="0 0 17 9"><rect x="1" y="1" width="9" height="6" rx="3" fill="none" stroke="#000" stroke-width="1.6"/><rect x="7" y="1.5" width="9" height="6" rx="3" fill="none" stroke="#000" stroke-width="1.6"/></svg>
<svg class="a" style="left:457px;top:280px" width="18" height="18" viewBox="0 0 18 18"><path d="M0 0 L4 4 L0 7 Z" fill="#000"/><rect x="4.5" y="4.5" width="12" height="12" fill="#ffff80" stroke="#000"/><path d="M5 16 L9 11 L13 16 Z" fill="#777"/><circle cx="13" cy="8" r="1.3" fill="none" stroke="#000"/></svg>
<div class="a" style="left:483px;top:289px;width:12px;height:2px;background:#000"></div>
<svg class="a" style="left:503px;top:283px" width="17" height="15" viewBox="0 0 17 15"><rect x="0.5" y="0.5" width="16" height="14" fill="#fff" stroke="#000"/><rect x="1" y="1" width="15" height="2" fill="#00008b"/><path d="M1 6.5h15M1 9.5h15M1 12.5h15M5.5 3v11M9.5 3v11M13.5 3v11" stroke="#999"/></svg>
<div class="a vsep" style="left:524px;top:280px;height:21px"></div>
<div class="a" style="left:528px;top:280px;width:21px;height:20px;background:#000"></div>
<svg class="a" style="left:530px;top:283px" width="17" height="15" viewBox="0 0 17 15"><path d="M2.5 14 L8.5 1.5 L14.5 14 M5 9.5 H12" fill="none" stroke="#2a2aff" stroke-width="1.6" stroke-dasharray="1.3 0.7"/></svg>
<div class="a ddk" style="left:550px;top:291px"></div>
<div class="a" style="left:557px;top:280px;width:20px;height:20px;background:#fff"></div>
<svg class="a" style="left:560px;top:284px" width="15" height="12" viewBox="0 0 15 12"><path d="M1 11 L3 8 L11 1 L14 3 L6 10 Z" fill="#fff" stroke="#000" stroke-width="1.3"/><path d="M5 8 L12 2.5" stroke="#2a9a2a" stroke-width="1.5"/><path d="M1.5 10.5 L3.5 8" stroke="#1030e0" stroke-width="1.6"/></svg>
<div class="a ddk" style="left:578px;top:291px"></div>
<div class="a vsep" style="left:587px;top:280px;height:21px"></div>
<!-- row2 -->
<div class="a grip" style="left:39px;top:305px;height:21px"></div>
<svg class="a" style="left:50px;top:309px" width="60" height="15" viewBox="0 0 60 15">
 <path d="M2 2h6.5c2.6 0 3.8 1.2 3.8 2.6 0 1.3-1 2-2.2 2.3 1.6.3 2.6 1.2 2.6 2.6 0 1.8-1.5 2.5-4 2.5H2v-1h1.2V3H2z M5.8 3v3.4h1.6c1.3 0 2-.6 2-1.7S8.7 3 7.4 3z M5.8 7.4V11h1.9c1.4 0 2.1-.6 2.1-1.8 0-1.2-.8-1.8-2.2-1.8z" fill="#000"/>
 <path d="M27 2h6v1h-1.3L29 11h1.3v1h-6v-1h1.3L28.3 3H27z" fill="#000"/>
 <path d="M45 2h5v1h-1.2v5.3c0 1.6.8 2.4 2.1 2.4 1.4 0 2.2-.8 2.2-2.4V3h-1.3V2h3.9v1h-1.1v5.3c0 2.6-1.4 3.8-3.8 3.8-2.5 0-4-1.2-4-3.8V3H45z" fill="#000"/>
 <path d="M45 13.5h10" stroke="#000" stroke-width="1.2"/>
</svg>
<div class="a vsep" style="left:113px;top:305px;height:22px"></div>
<svg class="a" style="left:120px;top:310px" width="60" height="12" viewBox="0 0 60 12"><g stroke="#000" stroke-width="1"><path d="M0 .5h14M0 2.5h10M0 4.5h14M0 6.5h10M0 8.5h14M0 10.5h10"/><path d="M22 .5h14M24 2.5h10M22 4.5h14M24 6.5h10M22 8.5h14M24 10.5h10"/><path d="M44 .5h14M48 2.5h10M44 4.5h14M48 6.5h10M44 8.5h14M48 10.5h10"/></g></svg>
<div class="a vsep" style="left:184px;top:305px;height:22px"></div>
<svg class="a" style="left:190px;top:308px" width="40" height="16" viewBox="0 0 40 16"><g fill="none" stroke="#00008b" stroke-width="1.1"><path d="M2 2.5l1.5-1v4M1.5 5.5h3"/><path d="M1.5 8c.5-1 3-1 3 .3 0 1-3 1.5-3 2.7h3"/><path d="M1.5 12h3l-1.5 1.3c1.5 0 1.5 2.2 0 2.2h-1.5"/></g><path d="M6 3h2M10 3h6M6 8h10M6 13h6M14 13h2" stroke="#000" stroke-width="1.2"/><g fill="#00008b"><path d="M24.5 1.5l1.5 1.5-1.5 1.5-1.5-1.5z"/><path d="M24.5 6.5l1.5 1.5-1.5 1.5-1.5-1.5z"/><path d="M24.5 11.5l1.5 1.5-1.5 1.5-1.5-1.5z"/></g><path d="M28 3h9M28 8h9M28 13h9" stroke="#000" stroke-width="1.2"/></svg>
<div class="a vsep" style="left:233px;top:305px;height:22px"></div>
<svg class="a" style="left:238px;top:309px" width="40" height="13" viewBox="0 0 40 13"><g stroke="#000" stroke-width="1.3"><path d="M2 1h14M7 4h9M7 7h9M2 10h14"/><path d="M24 1h14M29 4h9M29 7h9M24 10h14"/></g><path d="M7 5.5 H1 M3.5 3 L1 5.5 L3.5 8" stroke="#00008b" stroke-width="1.6" fill="none"/><path d="M22 5.5 H27 M25 3 L27.5 5.5 L25 8" stroke="#00008b" stroke-width="1.6" fill="none"/><path d="M8 4h8v3H8z" fill="#000"/><path d="M30 4h8v3h-8z" fill="#000"/></svg>
<div class="a vsep" style="left:282px;top:305px;height:22px"></div>
<div class="a" style="left:284px;top:304px;width:1px;height:24px;background:#a0a0a0"></div>
<div class="a grip" style="left:288px;top:305px;height:21px"></div>
<svg class="a" style="left:297px;top:309px" width="14" height="14" viewBox="0 0 14 14"><path d="M2 1 L10 9 M12 1 L4 9" stroke="#4a5a5a" stroke-width="1.5"/><circle cx="3.5" cy="11" r="2" fill="#fff" stroke="#000" stroke-width="1.3"/><circle cx="10.5" cy="11" r="2" fill="#fff" stroke="#000" stroke-width="1.3"/></svg>
<svg class="a" style="left:318px;top:308px" width="18" height="17" viewBox="318 308 18 17"><path d="M319.5 309.5 H325 L327.5 312 V319.5 H319.5 Z" fill="#fff" stroke="#000"/><path d="M321 312.5 H324 M321 314.5 H326 M321 316.5 H326" stroke="#000"/><path d="M325.5 313.5 H331 L334.5 317 V324.5 H325.5 Z" fill="#fff" stroke="#00008b"/><path d="M327 317.5 H331 M327 319.5 H333 M327 321.5 H333" stroke="#000"/></svg>
<svg class="a" style="left:340px;top:309px" width="17" height="15" viewBox="0 0 17 15"><rect x="0.5" y="2.5" width="11" height="11" rx="1" fill="#808080" stroke="#000"/><path d="M3.5 3h5V1h-5z" fill="#ffff80" stroke="#000"/><path d="M6.5 7.5h6l3 3v4h-9z" fill="#fff" stroke="#00008b"/><path d="M8 10h5M8 12h6" stroke="#00008b"/></svg>
<svg class="a" style="left:363px;top:309px" width="15" height="15" viewBox="0 0 15 15"><path d="M1 1 L14 14 M13 1 L1 13" stroke="#000" stroke-width="1.8"/></svg>
<div class="a vsep" style="left:383px;top:305px;height:22px"></div>
<svg class="a" style="left:391px;top:312px" width="36" height="9" viewBox="0 0 36 9"><path d="M3 4 C5 1 11 1 11 5 C11 7 10 8 9.5 8" fill="none" stroke="#00008b" stroke-width="1.4"/><path d="M0.5 2 L0.5 7 L5 7 Z" fill="#00008b"/><path d="M33 4 C31 1 25 1 25 5 C25 7 26 8 26.5 8" fill="none" stroke="#00008b" stroke-width="1.4"/><path d="M35.5 2 L35.5 7 L31 7 Z" fill="#00008b"/></svg>
<svg class="a" style="left:433px;top:308px" width="18" height="16" viewBox="0 0 18 16"><rect x="1" y="3" width="14" height="12" fill="#fff" stroke="#000" stroke-width="1.4"/><path d="M2 5h6" stroke="#00008b"/><path d="M8 7 L14 1.5 L17 3.5 L11 9 Z" fill="#ffff40" stroke="#000" stroke-width="1"/></svg>
<div class="a vsep" style="left:454px;top:305px;height:22px"></div>
<svg class="a" style="left:461px;top:309px" width="15" height="16" viewBox="0 0 15 16"><path d="M1 1h13v11h-4l1 3-4-3h-6z" fill="#ffffc0" stroke="#000" stroke-width="1.2"/><text x="7.5" y="10.5" font-family="Liberation Sans" font-weight="bold" font-size="10" fill="#00008b" text-anchor="middle">?</text></svg>
<div class="a vsep" style="left:481px;top:305px;height:22px"></div>
<!-- editor -->
<div class="a" style="left:37px;top:330px;width:633px;height:324px;background:#fff;border-left:2px solid #8a8a8a;border-right:1px solid #e0e0e0"></div>
<div class="t ed" style="left:49px;top:393px"><span style="display:inline-block;width:6px;overflow:visible"><span style="display:inline-block;font-family:'Liberation Mono',monospace;font-size:12.5px;transform:scaleX(0.8);transform-origin:0 0">1</span></span>、打开安装好的软件，用户可以选择合适的截图方式进行截图</div>
<div class="t ed" style="left:49px;top:426px"><span style="display:inline-block;width:6px;overflow:visible"><span style="display:inline-block;font-family:'Liberation Mono',monospace;font-size:12.5px;transform:scaleX(0.8);transform-origin:0 0">2</span></span>、</div>
<!-- bottom tabs -->
<svg class="a" style="left:37px;top:654px" width="140" height="17" viewBox="0 0 140 17">
 <path d="M0.5 0 V16" stroke="#000"/>
 <path d="M3 1 L11 16 L46 16 L50 1" fill="#c8c8c8" stroke="#000" stroke-width="1"/>
 <path d="M46 16 L50 1 L92 1 L88 16" fill="#c0c0c0" stroke="#000" stroke-width="1"/>
 <path d="M88 16 L92 1 L133 1 L129 16" fill="#c0c0c0" stroke="#000" stroke-width="1"/>
 <path d="M50 16 L46 16 M92 16 L88 16" stroke="#000"/>
</svg>
<div class="t" style="left:51px;top:656px;font-size:12px;font-weight:bold;color:#000">普通</div>
<div class="t" style="left:91px;top:657px;font-size:11px;color:#000;letter-spacing:0.3px">HTML</div>
<div class="t" style="left:136px;top:656px;font-size:12px;color:#000">预览</div>
<div class="a" style="left:176px;top:655px;width:2px;height:15px;background:#000"></div>
<div class="a" style="left:179px;top:655px;width:14px;height:15px;background:#c8c8c8;border:1px solid;border-color:#fff #808080 #808080 #fff"></div>
<div class="a" style="left:183px;top:659px;width:0;height:0;border-top:4px solid transparent;border-bottom:4px solid transparent;border-right:4px solid #808080"></div>
<div class="t" style="left:585px;top:656px;font-size:11px;color:#0000ff;text-decoration:underline">用户体验反馈</div>
<div class="a" style="left:653px;top:655px;width:16px;height:15px;background:#c8c8c8;border:1px solid;border-color:#fff #808080 #808080 #fff"></div>
<div class="a" style="left:659px;top:659px;width:0;height:0;border-top:4px solid transparent;border-bottom:4px solid transparent;border-left:4px solid #fff"></div>
<!-- buttons -->
<div class="btn" style="left:39px;top:681px;width:79px">文字检错</div>
<div class="btn" style="left:123px;top:681px;width:60px">简-&gt;繁</div>
<div class="a" style="left:184px;top:681px;width:121px;height:21px;background:#fff;border:1px solid;border-color:#808080 #fff #fff #808080;box-shadow:inset 1px 1px 0 #404040"></div>
<div class="t" style="left:187px;top:685px;font-family:'Liberation Mono',monospace;font-size:11.7px;color:#000">###NextPage###</div>
<div class="btn" style="left:311px;top:680px;width:39px;height:22px">插入</div>
<div class="a" style="left:362px;top:687px;width:14px;height:13px;background:#fff;border:1px solid #555"></div>
<svg class="a" style="left:364px;top:689px" width="10" height="10" viewBox="0 0 10 10"><path d="M1 5 L4 8 L9 1.5" fill="none" stroke="#000" stroke-width="1.6"/></svg>
<div class="t" style="left:384px;top:689px;font-size:12px;color:#000">段前空格?</div>
<div class="btn" style="left:444px;top:681px;width:78px">粘贴进来</div>
<div class="btn" style="left:528px;top:681px;width:62px">格式化</div>
<div class="btn" style="left:592px;top:681px;width:79px">拷贝出去</div>
<!-- window status bar -->
<div class="a" style="left:26px;top:734px;width:656px;height:1px;background:#a0a0a0"></div>
<div class="cell" style="left:26px;top:735px;width:167px">欢迎使用网络编辑超级工具箱</div>
<div class="cell" style="left:196px;top:735px;width:58px;font-size:11.5px;padding-left:3px">15:38:07</div>
<div class="cell" style="left:257px;top:735px;width:78px;font-size:11.5px;padding-left:3px">20/12/2016</div>
<div class="cell" style="left:338px;top:735px;width:344px"></div>
<svg class="a" style="left:668px;top:744px" width="14" height="14" viewBox="0 0 14 14"><path d="M13 2 L2 13 M13 6 L6 13 M13 10 L10 13" stroke="#a0a0a0" stroke-width="1"/><path d="M13 3 L3 13 M13 7 L7 13 M13 11 L11 13" stroke="#fff" stroke-width="1"/></svg>
<!-- handles -->
<div class="h" style="left:20px;top:194px"></div>
<div class="h" style="left:352px;top:194px"></div>
<div class="h" style="left:682px;top:194px"></div>
<div class="h" style="left:20px;top:477px"></div>
<div class="h" style="left:682px;top:477px"></div>
<div class="h" style="left:20px;top:758px"></div>
<div class="h" style="left:352px;top:758px"></div>
<div class="h" style="left:682px;top:758px"></div>

<!-- STATUS -->
<div id="status" class="a"></div>
<!-- status bar -->
<div class="a" style="left:929px;top:837px;width:1px;height:21px;background:#dcd8d6"></div>
<div class="a" style="left:1079px;top:837px;width:1px;height:21px;background:#dcd8d6"></div>
<div class="a" style="left:1229px;top:837px;width:1px;height:21px;background:#dcd8d6"></div>
<div class="a" style="left:1379px;top:837px;width:1px;height:21px;background:#dcd8d6"></div>
<svg class="a" style="left:935px;top:840px" width="12" height="13" viewBox="0 0 12 13"><path d="M6 1V12M0.5 6.5H11.5" stroke="#333" stroke-width="1.2"/><path d="M6 0 L4 2.5 H8 Z M6 13 L4 10.5 H8 Z M0 6.5 L2.5 4.5 V8.5 Z M12 6.5 L9.5 4.5 V8.5 Z" fill="#333"/></svg>
<div class="t" style="left:951px;top:842px;font-size:11px;color:#222">900, 147</div>
<svg class="a" style="left:1233px;top:840px" width="17" height="16" viewBox="1233 840 17 16"><path d="M1235.5 850 V843" stroke="#1e3050" stroke-width="1.2"/><path d="M1233.8 844.2 L1235.5 842 L1237.2 844.2 Z" fill="#1e3050"/><rect x="1238.6" y="842.6" width="8.3" height="7.3" fill="#eaf2f8" stroke="#1e3050" stroke-width="1.2"/><path d="M1238.5 852.5 H1246" stroke="#1e3050" stroke-width="1.2"/><path d="M1245.5 850.8 L1247.8 852.5 L1245.5 854.2 Z" fill="#1e3050"/></svg>
<div class="t" style="left:1251px;top:842px;font-size:11px;color:#222">658 x 560</div>
<!-- IME -->
<div class="a" style="left:1417px;top:836px;width:183px;height:24px;background:#fafcfe;border-top:1px solid #e4ded6;border-right:1px solid #e0e4ea"></div>
<svg class="a" style="left:1392px;top:832px" width="30" height="28" viewBox="0 0 30 28"><g transform="rotate(-12 15 14)"><rect x="3" y="3" width="24" height="22" rx="3" fill="#ef5a24"/><path d="M21 8 C18 6 9 6 9 10 C9 14 21 12 21 17 C21 21 11 21 8 19" fill="none" stroke="#fff" stroke-width="3.2" stroke-linecap="round"/></g></svg>
<svg class="a" style="left:1426px;top:840px" width="16" height="16" viewBox="0 0 16 16"><rect x="2" y="4.5" width="11.5" height="6.5" fill="none" stroke="#1f6ec8" stroke-width="2"/><path d="M7.75 1 V15" stroke="#1f6ec8" stroke-width="2"/></svg>
<svg class="a" style="left:1449px;top:841px" width="16" height="15" viewBox="0 0 16 15"><path d="M10 1 C14 3 15 9 12 12.5 C9 15 4 14.5 1 11.5 C5 12 9 10.5 10 6.5 C10.5 4.5 10.5 2.5 10 1 Z" fill="#1f6ec8"/></svg>
<div class="a" style="left:1472px;top:843px;width:5px;height:5px;border:1.5px solid #1f6ec8;border-radius:50%"></div>
<svg class="a" style="left:1477px;top:846px" width="7" height="9" viewBox="0 0 7 9"><path d="M3.5 0.5 a2.2 2.2 0 0 1 2.5 2.8 C5.5 5.5 4 7.5 2 8.5 C3 7 3.3 6 3 5 a2.2 2.2 0 0 1 0.5 -4.5 Z" fill="#1f6ec8"/></svg>
<svg class="a" style="left:1493px;top:838px" width="14" height="17" viewBox="0 0 14 17"><rect x="4" y="1" width="6" height="10" rx="3" fill="#1f6ec8"/><path d="M1.5 7 C1.5 14 12.5 14 12.5 7 M7 12.5 V16 M4 16 H10" fill="none" stroke="#1f6ec8" stroke-width="1.5"/></svg>
<svg class="a" style="left:1514px;top:840px" width="17" height="13" viewBox="0 0 17 13"><rect x="1" y="1" width="15" height="11" rx="1.5" fill="none" stroke="#1f6ec8" stroke-width="1.6"/><g fill="#1f6ec8"><rect x="3" y="3" width="2" height="2"/><rect x="6" y="3" width="2" height="2"/><rect x="9" y="3" width="2" height="2"/><rect x="12" y="3" width="2" height="2"/><rect x="3" y="6" width="2" height="2"/><rect x="6" y="6" width="2" height="2"/><rect x="9" y="6" width="2" height="2"/><rect x="12" y="6" width="2" height="2"/><rect x="4" y="9" width="9" height="1.5"/></g></svg>
<svg class="a" style="left:1537px;top:838px" width="19" height="17" viewBox="0 0 19 17"><circle cx="7" cy="4" r="3" fill="#1f6ec8"/><path d="M1 14 C1 9 3 7.5 7 7.5 C10 7.5 12 8.5 12 10 V15 H3 Z" fill="#1f6ec8"/><rect x="9" y="10" width="10" height="7" fill="#fff"/><text x="14" y="16.5" font-family="Liberation Sans" font-weight="bold" font-size="7" fill="#1f6ec8" text-anchor="middle">12</text></svg>
<svg class="a" style="left:1559px;top:839px" width="15" height="15" viewBox="0 0 15 15"><path d="M4.5 1 L6 2.5 H9 L10.5 1 L14.5 4 L12.5 7 L11.5 6.5 V14.5 H3.5 V6.5 L2.5 7 L0.5 4 Z" fill="#1f6ec8"/></svg>
<svg class="a" style="left:1580px;top:839px" width="16" height="16" viewBox="0 0 16 16"><path d="M2 14 L9 7" stroke="#1f6ec8" stroke-width="2.6" stroke-linecap="round"/><path d="M8 8 A4.5 4.5 0 0 1 13.5 1.5 L11 4.5 L12.5 6 L15 3 A4.5 4.5 0 0 1 8.5 9 Z" fill="#1f6ec8"/></svg>
<!-- volume widget -->
<div class="a" style="left:1590px;top:625px;width:12px;height:59px;background:#4a505c;border-radius:3px 0 0 3px;border:1px solid #3a3f48"></div><div class="a" style="left:1594px;top:632px;width:4px;height:1px;background:#2a2e36"></div><div class="a" style="left:1594px;top:634px;width:4px;height:1px;background:#2a2e36"></div><div class="a" style="left:1594px;top:636px;width:4px;height:1px;background:#2a2e36"></div><div class="a" style="left:1594px;top:638px;width:4px;height:1px;background:#2a2e36"></div><div class="a" style="left:1594px;top:640px;width:4px;height:1px;background:#2a2e36"></div><div class="a" style="left:1594px;top:642px;width:4px;height:1px;background:#2a2e36"></div><div class="a" style="left:1594px;top:644px;width:4px;height:1px;background:#f0b040"></div><div class="a" style="left:1594px;top:646px;width:4px;height:1px;background:#f0c040"></div><div class="a" style="left:1594px;top:648px;width:4px;height:1px;background:#f0d040"></div><div class="a" style="left:1594px;top:650px;width:4px;height:1px;background:#e8d848"></div><div class="a" style="left:1594px;top:652px;width:4px;height:1px;background:#e0e050"></div><div class="a" style="left:1594px;top:654px;width:4px;height:1px;background:#d8e050"></div><div class="a" style="left:1594px;top:656px;width:4px;height:1px;background:#c8e058"></div><div class="a" style="left:1594px;top:658px;width:4px;height:1px;background:#b8e060"></div><div class="a" style="left:1594px;top:660px;width:4px;height:1px;background:#a8e070"></div><div class="a" style="left:1594px;top:662px;width:4px;height:1px;background:#98e078"></div><div class="a" style="left:1594px;top:664px;width:4px;height:1px;background:#88e080"></div><div class="a" style="left:1594px;top:666px;width:4px;height:1px;background:#78e090"></div><div class="a" style="left:1594px;top:668px;width:4px;height:1px;background:#68e0a0"></div><div class="a" style="left:1594px;top:670px;width:4px;height:1px;background:#58e0b0"></div><div class="a" style="left:1594px;top:672px;width:4px;height:1px;background:#48e0c0"></div><div class="a" style="left:1594px;top:674px;width:4px;height:1px;background:#40e0c8"></div><div class="a" style="left:1594px;top:676px;width:4px;height:1px;background:#38dcd0"></div>


<div id="taskbar" class="a"><div class="a" style="left:196px;top:0;width:48px;height:8px;background:#353538"></div><div class="t" style="left:1495px;top:5px;font-size:12px;color:#fff">15:38</div><div class="a" style="left:1595px;top:0;width:1px;height:8px;background:#555"></div></div>
</body></html>
